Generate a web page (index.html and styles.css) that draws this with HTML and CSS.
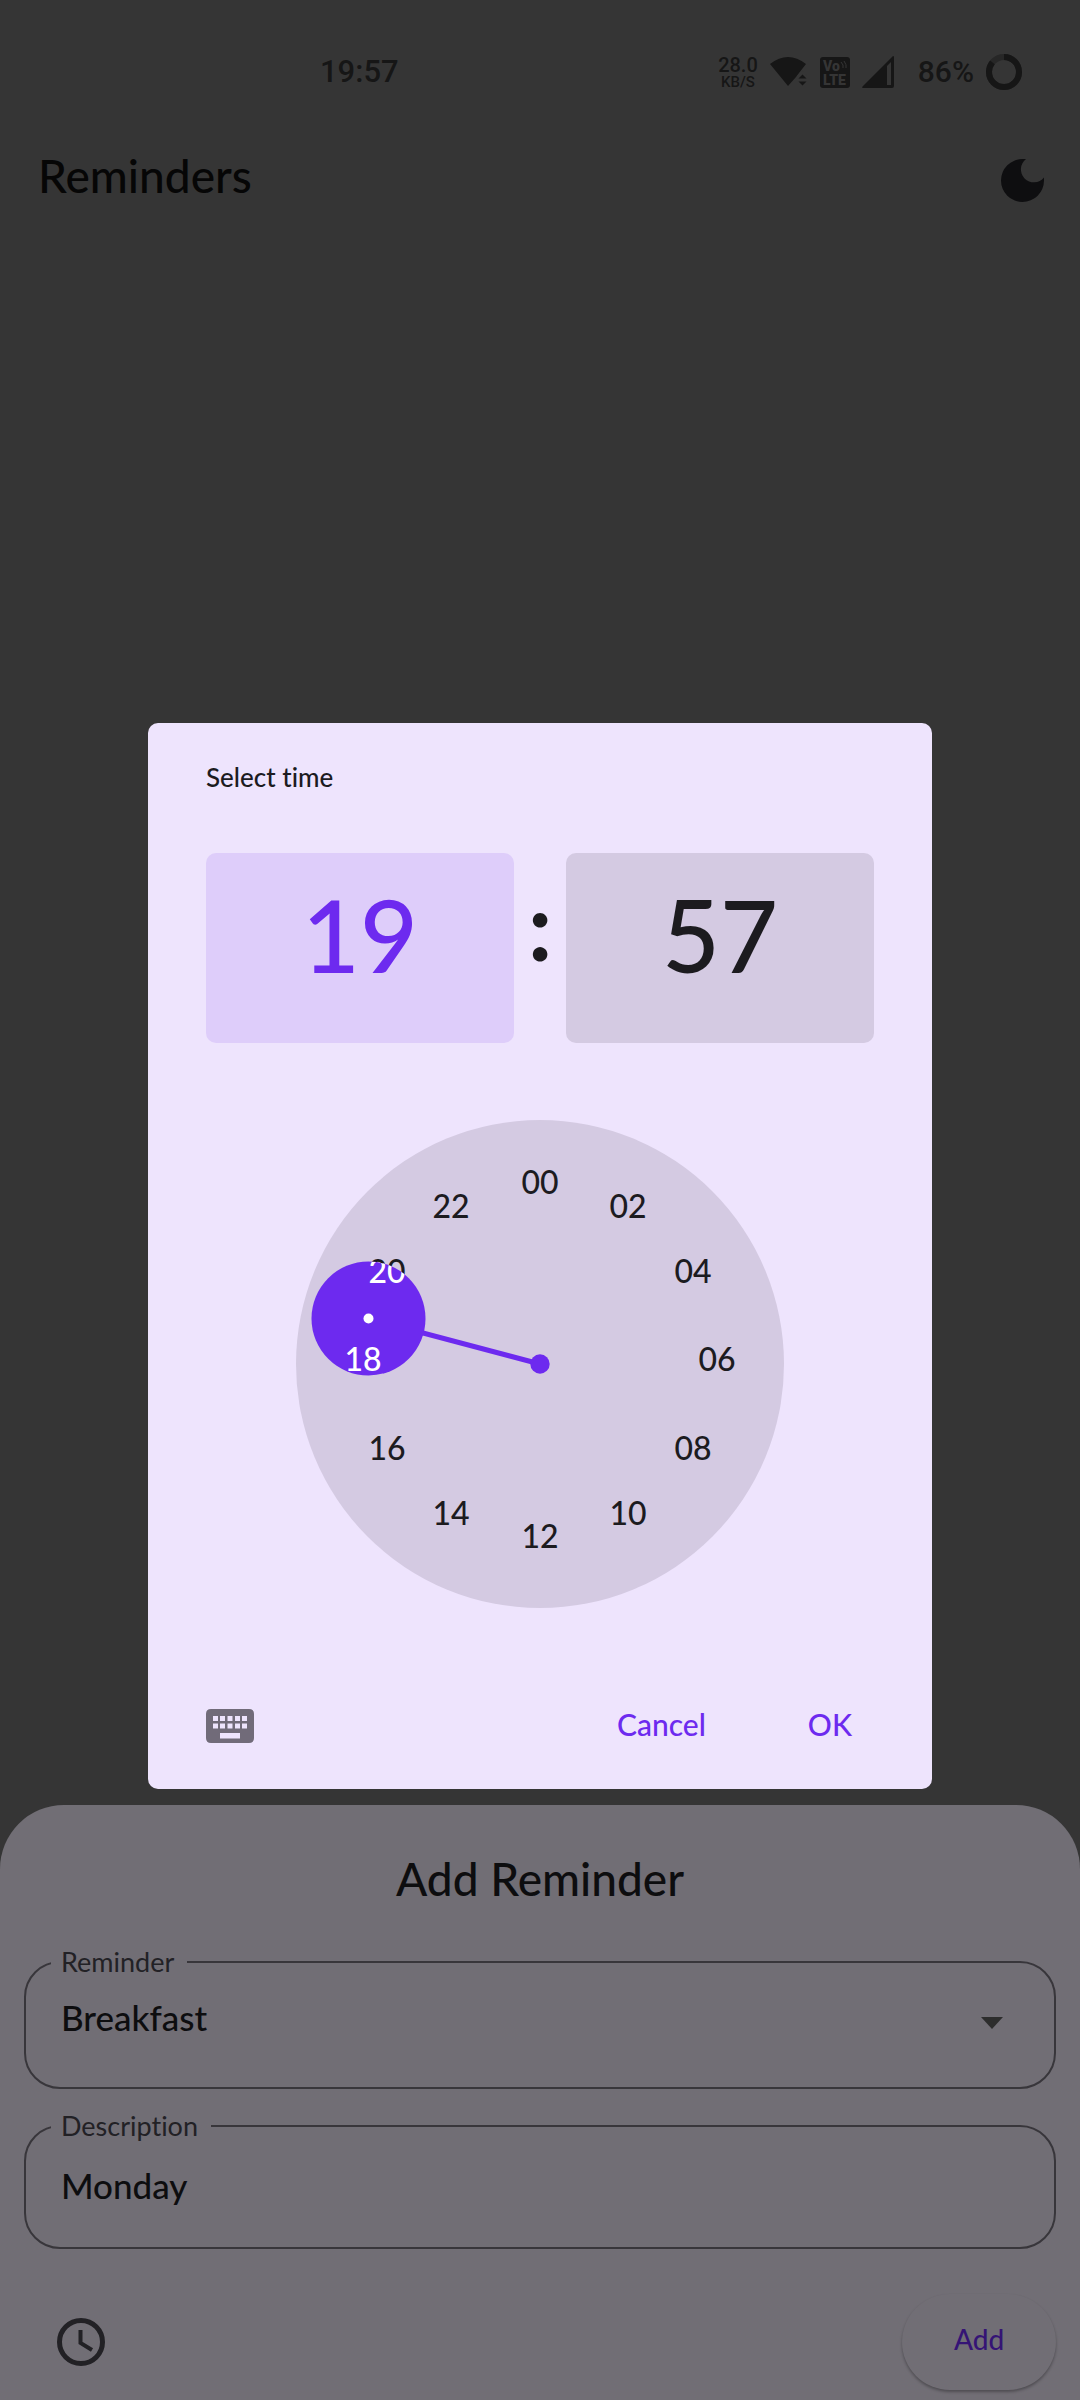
FILE: index.html
```html
<!DOCTYPE html>
<html lang="en">
<head>
<meta charset="utf-8">
<meta name="viewport" content="width=device-width, initial-scale=1">
<title>Reminders</title>
<link rel="stylesheet" href="styles.css">
</head>
<body>
<div class="app">
  <div class="status">
    <span class="status-time">19:57</span>
    <div class="status-icons">
      <span class="net"><span class="net-value">28.0</span><span class="net-unit">KB/S</span></span>
      <svg class="wifi" width="36" height="32" viewBox="0 0 36 32" aria-hidden="true">
        <path d="M0 8Q18-6 36 8L29 17L26 21L18 30Z"/>
        <path class="cut" d="M27 25V20L32 14L37 20V32H27Z"/>
        <path d="M28.500 22.500L32.500 18.500L36.500 22.500ZM28.500 25.500H36.500L32.500 29.500Z"/>
      </svg>
      <svg class="volte" width="30" height="31" viewBox="0 0 30 31" aria-hidden="true">
        <rect width="30" height="31" rx="3"/>
        <text x="3" y="14" font-size="14">Vo</text>
        <text x="3" y="28" font-size="14">LTE</text>
        <path d="M21 5Q24 8 23 11M24 4Q27 8 26 11" />
      </svg>
      <svg class="signal" width="32" height="32" viewBox="0 0 32 32" aria-hidden="true">
        <path d="M31 0Q32 0 32 1V30Q32 32 30 32H1Q-0.500 32 0.500 30.500Z"/>
        <path class="cut" d="M25 10L29 6V29H25Z"/>
      </svg>
      <span class="battery-text">86%</span>
      <svg class="battery" width="36" height="36" viewBox="0 0 36 36" aria-hidden="true">
        <circle class="ring-rest" cx="18" cy="18" r="15"/>
        <circle class="ring" cx="18" cy="18" r="15" pathLength="100" stroke-dasharray="86 14" transform="rotate(-90 18 18)"/>
      </svg>
    </div>
  </div>

  <header class="topbar">
    <h1 class="title">Reminders</h1>
    <button class="icon-button" type="button" aria-label="Dark theme">
      <svg class="moon" width="43" height="43" viewBox="0 0 43 43" aria-hidden="true">
        <path d="M21.500 0H25A13 13 0 1 0 43 18.500V21.500A21.500 21.500 0 1 1 21.500 0Z"/>
      </svg>
    </button>
  </header>

  <form class="sheet">
    <h2 class="title sheet-title">Add Reminder</h2>
    <fieldset class="field field-tall">
      <legend><label for="reminder">Reminder</label></legend>
      <div class="field-row">
        <select id="reminder" class="control"><option>Breakfast</option></select>
        <svg class="caret" width="22" height="12" viewBox="0 0 22 12" aria-hidden="true"><path d="M0 0H22L11 12Z"/></svg>
      </div>
    </fieldset>
    <fieldset class="field">
      <legend><label for="description">Description</label></legend>
      <div class="field-row">
        <input id="description" class="control" type="text" value="Monday">
      </div>
    </fieldset>
    <div class="sheet-actions">
      <button class="icon-button" type="button" aria-label="Pick time">
        <svg class="clock-icon" width="48" height="48" viewBox="0 0 48 48" aria-hidden="true">
          <circle cx="24" cy="24" r="21.500"/>
          <path class="hands" d="M23.500 12V25L35 32"/>
        </svg>
      </button>
      <button class="add" type="button">Add</button>
    </div>
  </form>
</div>

<div class="overlay">
  <section class="dialog" role="dialog" aria-labelledby="dialog-title">
    <h2 id="dialog-title" class="dialog-title">Select time</h2>
    <div class="time">
      <button class="time-box time-box-active" type="button">19</button>
      <span class="colon">:</span>
      <button class="time-box" type="button">57</button>
    </div>
    <svg class="dial" viewBox="0 0 488 488" role="img" aria-label="Hour dial">
      <defs>
        <clipPath id="selector"><circle cx="72.500" cy="198.500" r="57"/></clipPath>
      </defs>
      <circle class="dial-face" cx="244" cy="244" r="244"/>
      <g class="dial-numbers">
        <text x="244" y="74">00</text>
        <text x="332" y="98">02</text>
        <text x="397" y="163">04</text>
        <text x="421" y="251">06</text>
        <text x="397" y="340">08</text>
        <text x="332" y="405">10</text>
        <text x="244" y="428">12</text>
        <text x="155" y="405">14</text>
        <text x="91" y="340">16</text>
        <text x="67" y="251">18</text>
        <text x="91" y="163">20</text>
        <text x="155" y="98">22</text>
      </g>
      <path class="hand" d="M244 244L72.500 198.500"/>
      <circle class="accent" cx="244" cy="244" r="9.700"/>
      <circle class="accent" cx="72.500" cy="198.500" r="57"/>
      <g class="dial-numbers dial-numbers-on" clip-path="url(#selector)" aria-hidden="true">
        <text x="67" y="251">18</text>
        <text x="91" y="163">20</text>
        <circle cx="72.500" cy="198.500" r="5"/>
      </g>
    </svg>
    <div class="dialog-actions">
      <button class="icon-button" type="button" aria-label="Keyboard input">
        <svg class="keyboard" width="48" height="34" viewBox="0 0 48 34" aria-hidden="true">
          <path fill-rule="evenodd" d="M5 0H43Q48 0 48 5V29Q48 34 43 34H5Q0 34 0 29V5Q0 0 5 0ZM7 7v5h5v-5ZM14 7v5h5v-5ZM21.500 7v5h5v-5ZM29 7v5h5v-5ZM36 7v5h5v-5ZM7 14.500v5h5v-5ZM14 14.500v5h5v-5ZM21.500 14.500v5h5v-5ZM29 14.500v5h5v-5ZM36 14.500v5h5v-5ZM14 24v5.500h20v-5.500Z"/>
        </svg>
      </button>
      <div class="dialog-buttons">
        <button class="text-button" type="button">Cancel</button>
        <button class="text-button" type="button">OK</button>
      </div>
    </div>
  </section>
</div>
</body>
</html>
```
FILE: styles.css
```css
* {
  box-sizing: border-box;
}

body {
  margin: 0;
  background: #353535;
  color: #0d0d0f;
  font-family: Lato, "Open Sans", sans-serif;
  font-variant-ligatures: none;
}

button {
  margin: 0;
  padding: 0;
  border: 0;
  background: none;
  color: inherit;
  font: inherit;
}

h1,
h2 {
  margin: 0;
}

svg {
  display: block;
  overflow: visible;
}

.app {
  display: flex;
  flex-direction: column;
  min-height: 100vh;
}

/* Status bar */
.status {
  display: flex;
  align-items: center;
  justify-content: space-between;
  padding: 54px 58px 0 320px;
  color: #161616;
  fill: #161616;
  font-family: Roboto, sans-serif;
  font-weight: 500;
}

.status-time {
  font-size: 31px;
  line-height: 36px;
}

.status-icons {
  display: flex;
  align-items: center;
  gap: 12px;
}

.net {
  display: flex;
  flex-direction: column;
  align-items: center;
}

.net-value {
  font-size: 20px;
  line-height: 19px;
}

.net-unit {
  font-size: 15px;
  line-height: 14px;
}

.cut,
.volte text {
  fill: #353535;
}

.volte {
  margin-left: 2px;
  font-weight: 900;
}

.volte path {
  fill: none;
  stroke: #353535;
  stroke-width: 1;
}

.battery-text {
  margin-left: 12px;
  font-size: 30px;
  line-height: 36px;
}

.ring,
.ring-rest {
  fill: none;
  stroke: #161616;
  stroke-width: 6;
}

.ring-rest {
  stroke: #272727;
}

/* App bar */
.topbar {
  display: flex;
  align-items: center;
  justify-content: space-between;
  padding: 56px 36px 60px 38px;
  color: #060606;
}

.topbar .title {
  padding-bottom: 8px;
}

.title {
  font-size: 46px;
  font-weight: 500;
  line-height: 60px;
}

.moon {
  fill: #0e0e10;
}

/* Bottom sheet */
.sheet {
  margin-top: auto;
  padding: 44px 24px 10px;
  border-radius: 64px 64px 0 0;
  background: #716e75;
}

.sheet-title {
  margin-bottom: 41px;
  text-align: center;
}

.field {
  min-width: 0;
  margin: 0 0 25px;
  padding: 11px 25px 26px;
  border: 2px solid #38363b;
  border-radius: 36px;
}

.field-tall {
  padding-top: 7px;
  padding-bottom: 34px;
}

.field legend {
  padding: 0 13px 0 10px;
  color: #222125;
  font-size: 27px;
  line-height: 24px;
}

.field-row {
  display: flex;
  align-items: center;
  padding: 0 26px 0 10px;
}

.control {
  flex: 1;
  min-width: 0;
  height: 72px;
  padding: 0;
  border: 0;
  outline: 0;
  background: none;
  appearance: none;
  color: #0d0d0f;
  font: 500 35px/72px Lato, "Open Sans", sans-serif;
}

.caret {
  margin-top: 12px;
  fill: #2d2d2d;
}

.sheet-actions {
  display: flex;
  align-items: center;
  justify-content: space-between;
  margin-top: 45px;
  padding-left: 33px;
}

.clock-icon {
  fill: none;
  stroke: #222125;
  stroke-width: 5;
}

.hands {
  stroke-width: 4;
}

.add {
  width: 154px;
  height: 96px;
  padding-bottom: 6px;
  border-radius: 48px;
  box-shadow: 0 2px 3px rgba(0, 0, 0, 0.3);
  background: #716e75;
  color: #351475;
  font-size: 28px;
  font-weight: 500;
}

/* Time picker */
.overlay {
  position: fixed;
  inset: 0;
  display: flex;
  align-items: center;
  justify-content: center;
  padding: 112px 24px 0;
}

.dialog {
  width: 100%;
  max-width: 784px;
  padding: 38px 58px 31px;
  border-radius: 10px;
  background: #eee4fd;
  color: #1c1b1f;
}

.dialog-title {
  margin-bottom: 60px;
  font-size: 26px;
  font-weight: 500;
  line-height: 32px;
}

.time {
  display: flex;
  align-items: center;
  margin-bottom: 77px;
  line-height: 120px;
}

.time-box {
  flex: 1;
  height: 190px;
  padding-bottom: 28px;
  border-radius: 10px;
  background: #d4cae2;
  font-size: 100px;
  font-weight: 500;
}

.time-box-active {
  background: #decdfa;
  color: #6d2aef;
}

.colon {
  width: 52px;
  padding-bottom: 48px;
  font-size: 96px;
  font-weight: 700;
  text-align: center;
}

.dial {
  width: 100%;
  max-width: 488px;
  margin: 0 auto 86px;
}

.dial-face {
  fill: #d4cae2;
}

.dial-numbers {
  fill: #1c1b1f;
  font-size: 32px;
  font-weight: 500;
  text-anchor: middle;
}

.dial-numbers-on {
  fill: #ffffff;
}

.hand {
  stroke: #6d2aef;
  stroke-width: 5;
}

.accent {
  fill: #6d2aef;
}

.dialog-actions {
  display: flex;
  align-items: center;
  justify-content: space-between;
  height: 64px;
}

.keyboard {
  fill: #716b79;
}

.dialog-buttons {
  display: flex;
  gap: 58px;
  padding-bottom: 4px;
}

.text-button {
  padding: 0 22px;
  color: #6d2aef;
  font-size: 30px;
  font-weight: 500;
  line-height: 60px;
}
```
